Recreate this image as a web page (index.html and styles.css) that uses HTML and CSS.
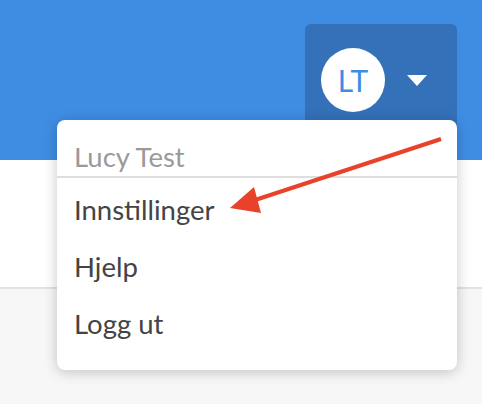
FILE: index.html
```html
<!DOCTYPE html>
<html lang="no">
<head>
    <meta charset="UTF-8">
    <meta name="viewport" content="width=device-width, initial-scale=1.0">
    <title>Brukermeny</title>
    <link rel="stylesheet" href="styles.css">
</head>
<body>

    <!-- Top bar -->
    <header class="topbar">
        <button class="user-button">
            <span class="avatar">LT</span>
            <span class="caret"></span>
        </button>
    </header>

    <div class="subbar"></div>
    <main class="page"></main>

    <!-- User dropdown -->
    <div class="user-menu">
        <div class="user-name">Lucy Test</div>
        <nav class="menu-list">
            <a class="menu-item" href="#">Innstillinger</a>
            <a class="menu-item" href="#">Hjelp</a>
            <a class="menu-item" href="#">Logg ut</a>
        </nav>
    </div>

    <!-- Annotation arrow -->
    <svg class="annotation" width="482" height="404" viewBox="0 0 482 404">
        <line x1="441" y1="139" x2="252" y2="201" stroke="#e8432a" stroke-width="4"/>
        <polygon points="230,208 254,187 261,213" fill="#e8432a"/>
    </svg>

</body>
</html>
```

FILE: styles.css
```css
/* General Styles */
body {
    margin: 0;
    font-family: Lato, "Open Sans", sans-serif;
    background-color: #f7f7f7;
    position: relative;
    height: 404px;
    overflow: hidden;
}

/* Top bar */
.topbar {
    height: 160px;
    background: #3f8de3;
    display: flex;
    justify-content: flex-end;
    align-items: flex-start;
    padding: 24px 25px 0 0;
    box-sizing: border-box;
}

.user-button {
    width: 152px;
    height: 120px;
    background: #3471b9;
    border: none;
    border-radius: 6px;
    display: flex;
    align-items: flex-start;
    padding: 24px 0 0 16px;
    box-sizing: border-box;
    gap: 22px;
    cursor: pointer;
}

.avatar {
    width: 64px;
    height: 64px;
    border-radius: 50%;
    background: #fff;
    color: #3f8de3;
    font-family: Lato, sans-serif;
    font-size: 30px;
    display: flex;
    align-items: center;
    justify-content: center;
}

.caret {
    margin-top: 27px;
    width: 0;
    height: 0;
    border-left: 10px solid transparent;
    border-right: 10px solid transparent;
    border-top: 11px solid #fff;
}

.subbar {
    height: 127px;
    background: #fff;
    border-bottom: 2px solid #e2e2e2;
}

/* Dropdown */
.user-menu {
    position: absolute;
    top: 120px;
    right: 25px;
    width: 400px;
    height: 250px;
    background: #fff;
    border-radius: 8px;
    box-shadow: 0 2px 14px rgba(0, 0, 0, 0.22);
}

.user-name {
    height: 58px;
    padding: 21px 0 0 17px;
    box-sizing: border-box;
    font-size: 27.5px;
    line-height: 32px;
    color: #9a9a9a;
    border-bottom: 2px solid #dedede;
}

.menu-list {
    display: flex;
    flex-direction: column;
    padding-top: 3px;
}

.menu-item {
    padding: 0 17px;
    height: 57px;
    display: flex;
    align-items: center;
    font-size: 27.5px;
    color: #444;
    text-decoration: none;
}

.annotation {
    position: absolute;
    top: 0;
    left: 0;
    pointer-events: none;
}
```
